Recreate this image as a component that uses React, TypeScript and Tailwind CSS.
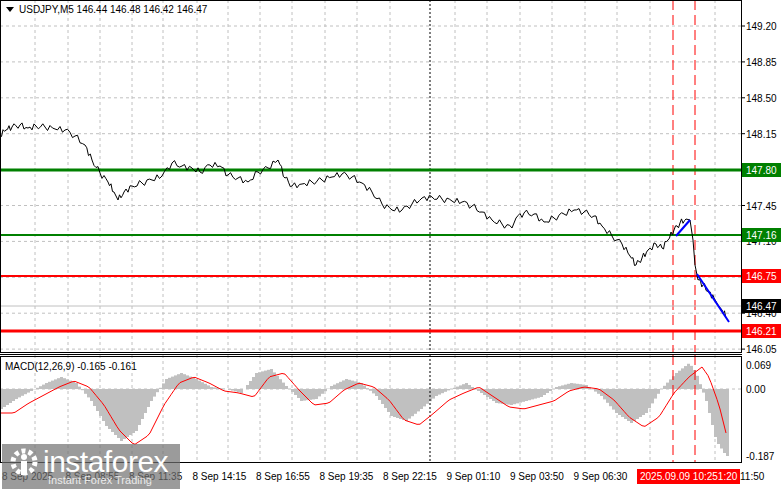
const W = 741;
const font = '"Liberation Sans", Arial, sans-serif';

const pricePts: [number, number][] = [
  [0,135],[6,130],[12,127],[20,125],[28,128],[36,126],[45,127],[55,129],[65,130],[75,136],[85,145],[92,160],[100,173],[108,182],[114,192],[118,200],[124,192],[132,186],[142,183],[152,180],[162,176],[172,163],[182,166],[192,168],[200,172],[210,165],[220,166],[228,175],[238,178],[248,182],[258,172],[268,168],[278,160],[285,178],[292,186],[302,184],[312,182],[322,180],[332,177],[342,174],[352,177],[362,183],[372,192],[382,204],[392,210],[402,210],[412,204],[422,198],[432,197],[442,199],[452,201],[462,202],[472,206],[482,212],[492,220],[502,224],[512,228],[516,218],[524,213],[534,214],[544,222],[554,218],[564,214],[574,210],[584,212],[594,216],[602,226],[612,236],[622,244],[630,256],[636,265],[642,258],[648,250],[656,244],[662,248],[668,240],[674,230],[680,223],[686,219],[690,220],[693,240],[695,265],[698,280],[703,285],[709,292],[714,298],[718,305],[722,310],[727,318],
];

// add a bit of deterministic jitter so the line looks like real ticks
const jagged: [number, number][] = [];
pricePts.forEach((p, i) => {
  const n = pricePts[i + 1];
  jagged.push(p);
  if (n && n[0] - p[0] > 4) {
    for (let k = 1; k < 4; k++) {
      const x = p[0] + ((n[0] - p[0]) * k) / 4;
      const y = p[1] + ((n[1] - p[1]) * k) / 4 + Math.sin(i * 7.3 + k * 2.1) * 3.2;
      jagged.push([x, y]);
    }
  }
});

const macdKeys: [number, number][] = [
  [0,408],[15,398],[30,390],[45,382],[60,376],[75,382],[90,400],[105,425],[120,440],[135,430],[150,400],[165,378],[180,372],[195,378],[210,386],[225,388],[240,392],[255,372],[270,368],[285,385],[300,400],[315,398],[330,385],[345,378],[360,382],[375,395],[390,415],[405,420],[420,408],[435,395],[450,388],[465,382],[480,392],[495,402],[510,404],[525,400],[540,396],[555,386],[570,382],[585,384],[600,395],[615,412],[630,422],[645,412],[660,388],[675,372],[688,362],[695,372],[705,400],[715,440],[725,455],
];

function interp(keys: [number, number][], x: number) {
  for (let i = 0; i < keys.length - 1; i++) {
    const [x0, y0] = keys[i];
    const [x1, y1] = keys[i + 1];
    if (x >= x0 && x <= x1) return y0 + ((y1 - y0) * (x - x0)) / (x1 - x0);
  }
  return keys[keys.length - 1][1];
}

const pathOf = (pts: [number, number][]) => pts.map((p, i) => `${i ? 'L' : 'M'}${p[0].toFixed(1)},${p[1].toFixed(1)}`).join(' ');

const priceLabels = ['149.20', '148.85', '148.50', '148.15', '147.80', '147.45', '147.10', '146.75', '146.40', '146.05'];
const vGrid = [35, 68, 100, 132, 163, 197, 228, 260, 292, 325, 357, 390, 455, 487, 520, 552, 585, 617, 650, 715];

function Tag({ y, text, bg }: { y: number; text: string; bg: string }) {
  return (
    <g>
      <rect x={742} y={y - 7} width={39} height={14} fill={bg} />
      <text x={746} y={y + 4} fontSize={10} fill="white" fontFamily={font}>{text}</text>
    </g>
  );
}

function MainPanel() {
  return (
    <svg width={781} height={354} className="block">
      {priceLabels.map((_, i) => (
        <line key={i} x1={0} x2={W} y1={26 + i * 35.9} y2={26 + i * 35.9} stroke="#c0c0c0" strokeDasharray="3 3" />
      ))}
      {vGrid.map((x) => (
        <line key={x} x1={x} x2={x} y1={0} y2={352} stroke="#c0c0c0" strokeDasharray="3 3" />
      ))}
      <line x1={430} x2={430} y1={0} y2={352} stroke="#000" strokeDasharray="2 2" />
      <line x1={673} x2={673} y1={0} y2={352} stroke="#ff0000" strokeDasharray="10 5" />
      <line x1={695} x2={695} y1={0} y2={352} stroke="#ff0000" strokeDasharray="10 5" />
      <line x1={0} x2={W} y1={170} y2={170} stroke="#008000" strokeWidth={3} />
      <line x1={0} x2={W} y1={235} y2={235} stroke="#008000" strokeWidth={2} />
      <line x1={0} x2={W} y1={276} y2={276} stroke="#ff0000" strokeWidth={2} />
      <line x1={0} x2={W} y1={306} y2={306} stroke="#c0c0c0" />
      <line x1={0} x2={W} y1={331} y2={331} stroke="#ff0000" strokeWidth={3} />
      <path d={pathOf(jagged)} fill="none" stroke="#000" strokeWidth={1} />
      <line x1={676} y1={236} x2={690} y2={220} stroke="#0000ff" strokeWidth={2} />
      <line x1={697} y1={274} x2={729} y2={322} stroke="#0000ff" strokeWidth={2} />
      <rect x={0.5} y={0.5} width={W} height={352} fill="none" stroke="#000" />
      {priceLabels.map((t, i) => (
        <g key={t}>
          <line x1={W} x2={W + 4} y1={26 + i * 35.9} y2={26 + i * 35.9} stroke="#000" />
          <text x={746} y={30 + i * 35.9} fontSize={10} fill="#000" fontFamily={font}>{t}</text>
        </g>
      ))}
      <Tag y={170} text="147.80" bg="#008000" />
      <Tag y={235} text="147.16" bg="#008000" />
      <Tag y={276} text="146.75" bg="#ff0000" />
      <Tag y={306} text="146.47" bg="#000" />
      <Tag y={331} text="146.21" bg="#ff0000" />
      <path d="M6,7 L14,7 L10,12 Z" fill="#000" />
      <text x={19} y={13} fontSize={10} fontFamily={font} fill="#000">USDJPY,M5  146.44 146.48 146.42 146.47</text>
    </svg>
  );
}

function MacdPanel() {
  const off = -354;
  const bars = [];
  for (let x = 0; x < 728; x += 3) {
    const y = interp(macdKeys, x) + off;
    const z = 388 + off;
    bars.push(<rect key={x} x={x} y={Math.min(y, z)} width={3} height={Math.abs(y - z)} fill="#c0c0c0" />);
  }
  const sig: [number, number][] = [];
  for (let x = 0; x < 728; x += 3) sig.push([x, interp(macdKeys, Math.max(0, x - 14)) + off + 4]);
  return (
    <svg width={781} height={109} className="block">
      {vGrid.map((x) => (
        <line key={x} x1={x} x2={x} y1={0} y2={108} stroke="#c0c0c0" strokeDasharray="3 3" />
      ))}
      <line x1={0} x2={W} y1={34} y2={34} stroke="#c0c0c0" strokeDasharray="3 3" />
      {bars}
      <line x1={430} x2={430} y1={0} y2={108} stroke="#000" strokeDasharray="2 2" />
      <line x1={673} x2={673} y1={0} y2={108} stroke="#ff0000" strokeDasharray="10 5" />
      <line x1={695} x2={695} y1={0} y2={108} stroke="#ff0000" strokeDasharray="10 5" />
      <path d={pathOf(sig)} fill="none" stroke="#ff0000" strokeWidth={1} />
      <rect x={0.5} y={1.5} width={W} height={106} fill="none" stroke="#000" />
      <text x={5} y={15} fontSize={10} fontFamily={font} fill="#000">MACD(12,26,9) -0.165 -0.161</text>
      <text x={746} y={14} fontSize={10} fontFamily={font} fill="#000">0.069</text>
      <text x={746} y={38} fontSize={10} fontFamily={font} fill="#000">0.00</text>
      <text x={746} y={105} fontSize={10} fontFamily={font} fill="#000">-0.187</text>
    </svg>
  );
}

const timeLabels = ['8 Sep 2025', '8 Sep 08:55', '8 Sep 11:35', '8 Sep 14:15', '8 Sep 16:55', '8 Sep 19:35', '8 Sep 22:15', '9 Sep 01:10', '9 Sep 03:50', '9 Sep 06:30'];

export default function App() {
  return (
    <div className="relative w-[781px] h-[489px] overflow-hidden bg-white" style={{ fontFamily: font }}>
      <MainPanel />
      <div className="h-[1px] bg-black w-[742px]" />
      <MacdPanel />
      <div className="flex items-center h-[25px] pl-[2px] text-[10px] leading-none text-black whitespace-nowrap">
        {timeLabels.map((t) => (
          <span key={t} className="w-[63.5px] shrink-0">{t}</span>
        ))}
        <span className="ml-[0px] h-[15px] w-[103px] px-[3px] bg-[#ff0000] text-white leading-[15px] flex justify-between">
          <span>2025.09.09 10:25</span>
          <span>1:20</span>
        </span>
        <span>11:50</span>
      </div>
      <div className="absolute left-[2px] top-[444px] w-[178px] h-[45px] bg-[#707070]/70 flex flex-col justify-center pl-[6px]">
        <div className="flex items-center gap-[3px]">
          <svg width={32} height={30} viewBox="0 0 32 30">
            <circle cx={16} cy={15} r={11} fill="none" stroke="white" strokeWidth={5} strokeDasharray="4 3" />
            <circle cx={16} cy={10} r={3} fill="white" />
            <rect x={13} y={14} width={6} height={14} fill="white" />
          </svg>
          <span className="text-white text-[30px] leading-none font-['Open_Sans',sans-serif] tracking-[-0.5px]">instaforex</span>
        </div>
        <span className="text-white/80 text-[11px] leading-none ml-[40px] -mt-[2px]">Instant Forex Trading</span>
      </div>
    </div>
  );
}
